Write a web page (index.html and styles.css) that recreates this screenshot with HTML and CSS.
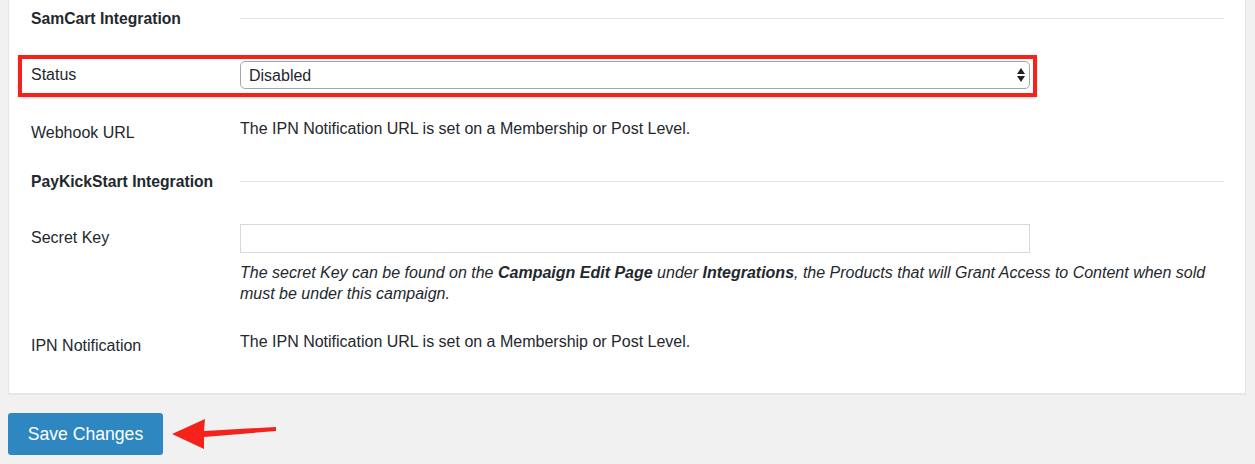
FILE: index.html
```html
<!DOCTYPE html>
<html>
<head>
<meta charset="utf-8">
<link rel="stylesheet" href="styles.css">
</head>
<body>
<div class="page">
  <div class="panel">
    <div class="section-head"><h3>SamCart Integration</h3><span class="rule"></span></div>
    <div class="row row-status">
      <div class="label">Status</div>
      <div class="value">
        <div class="select-wrap">
          <select class="select"><option>Disabled</option></select>
          <svg class="updown" width="10" height="16" viewBox="0 0 10 16"><path d="M5 1 L9 7 L1 7 Z M1 9 L9 9 L5 15 Z" fill="#222"/></svg>
        </div>
      </div>
      <div class="highlight"></div>
    </div>
    <div class="row row-webhook">
      <div class="label">Webhook URL</div>
      <div class="value">The IPN Notification URL is set on a Membership or Post Level.</div>
    </div>
    <div class="section-head head2"><h3>PayKickStart Integration</h3><span class="rule"></span></div>
    <div class="row row-secret">
      <div class="label">Secret Key</div>
      <div class="value">
        <input class="text-input" type="text">
        <p class="desc">The secret Key can be found on the <b>Campaign Edit Page</b> under <b>Integrations</b>, the Products that will Grant Access to Content when sold must be under this campaign.</p>
      </div>
    </div>
    <div class="row row-ipn">
      <div class="label">IPN Notification</div>
      <div class="value">The IPN Notification URL is set on a Membership or Post Level.</div>
    </div>
  </div>
  <div class="actions">
    <button class="btn-primary">Save Changes</button>
    <svg class="arrow" width="110" height="34" viewBox="0 0 110 34"><path d="M1 15 L34 0 L33 12 L105 8 L105 12 L33 18 L33 30 Z" fill="#f5221b"/></svg>
  </div>
</div>
</body>
</html>
```
FILE: styles.css
```css
* { box-sizing: border-box; }
html, body { margin: 0; padding: 0; background: #f1f1f1; }
body { font-family: "Liberation Sans", Arial, sans-serif; color: #23282d; font-size: 16px; }
.page { padding-left: 8px; width: 1255px; height: 464px; overflow: hidden; }
.panel {
  width: 1238px;
  background: #fff;
  border: 1px solid #e5e5e5;
  border-top: none;
  box-shadow: 0 1px 1px rgba(0,0,0,.04);
  padding: 0 21px 38px 22px;
  height: 394px;
}
.section-head { display: flex; align-items: center; height: 36px; }
.section-head h3 { margin: 0; padding-top: 2px; width: 209px; font-size: 15.7px; font-weight: bold; color: #23282d; }
.section-head .rule { flex: 1; border-top: 1px solid #e1e1e1; }
.head2 { height: 42px; }
.row { display: flex; position: relative; }
.label { width: 209px; flex: none; line-height: 18px; }
.value { flex: 1; line-height: 18px; }
.row-status { height: 64px; padding-top: 25px; }
.row-status .label { line-height: 28px; }
.select-wrap { position: relative; width: 790px; height: 28px; }
.select {
  -webkit-appearance: none; appearance: none;
  width: 100%; height: 28px;
  border: 1px solid #a6a6a6; border-radius: 5px;
  background: #fff;
  font-family: "Liberation Sans", Arial, sans-serif; font-size: 16px; color: #23282d;
  padding: 0 8px;
}
.updown { position: absolute; right: 4px; top: 6px; }
.highlight {
  position: absolute; left: -13px; top: 19px;
  width: 1019px; height: 42px;
  border: 4px solid #f5221b;
  box-shadow: 0 1px 2px rgba(0,0,0,.2);
}
.row-webhook { height: 60px; }
.row-webhook .label { padding-top: 24px; }
.row-webhook .value { padding-top: 20px; }
.row-secret { height: 108px; }
.row-secret .label { padding-top: 27px; }
.row-secret .value { padding-top: 22px; }
.text-input { display: block; width: 790px; height: 29px; border: 1px solid #d8d8d8; background: #fff; margin: 0; }
.desc { margin: 9px 0 0; font-style: italic; line-height: 21px; width: 984px; }
.row-ipn .label { padding-top: 27px; }
.row-ipn .value { padding-top: 23px; }
.actions { position: relative; padding-top: 19px; }
.btn-primary {
  width: 155px; height: 42px;
  background: #2e87c0; color: #fff;
  border: none; border-radius: 3px;
  font-family: "Liberation Sans", Arial, sans-serif; font-size: 17.6px;
  padding: 0;
}
.arrow { position: absolute; left: 163px; bottom: 2px; }
```
